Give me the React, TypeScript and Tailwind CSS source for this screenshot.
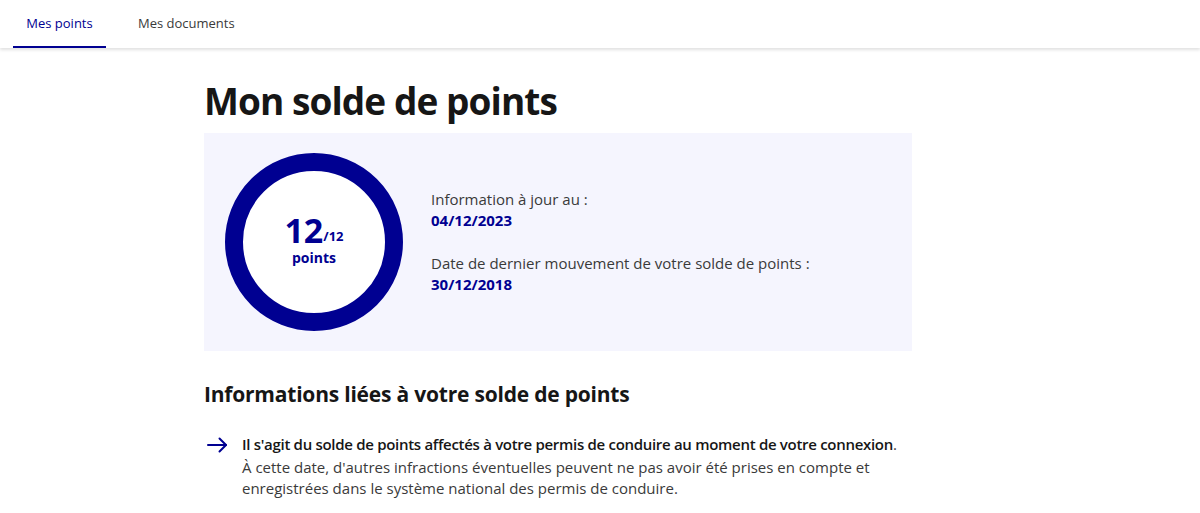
export default function App() {
  return (
    <div className="min-h-screen bg-white text-[#161616]" style={{ fontFamily: '"Open Sans", Arial, sans-serif' }}>
      {/* Tabs */}
      <nav className="h-12 shadow-[0_2px_3px_rgba(0,0,0,0.12)] flex items-stretch pl-[13px]">
        <button className="relative w-[93px] text-[13px] text-[#000091] font-medium">
          Mes points
          <span className="absolute left-0 right-0 bottom-0 h-[2px] bg-[#000091]"></span>
        </button>
        <button className="ml-[25px] px-[7px] text-[13px] text-[#3a3a3a] font-medium">Mes documents</button>
      </nav>

      <main className="w-[792px] mx-auto pt-[29px]">
        <h1 className="text-[37px] leading-[48px] font-bold tracking-tight">Mon solde de points</h1>

        {/* Balance card */}
        <section className="mt-[8px] w-[708px] h-[218px] bg-[#f5f5fe] flex items-center pl-[21px]">
          <div className="w-[178px] h-[178px] rounded-full border-[18px] border-[#000091] bg-white flex flex-col items-center justify-center text-[#000091]">
            <div className="flex items-end leading-[36px] mt-[-6px]">
              <span className="text-[34px] font-bold">12</span>
              <span className="text-[13px] leading-[20px] font-bold mb-[2px]">/12</span>
            </div>
            <span className="text-[14px] leading-[18px] font-bold mt-[1px]">points</span>
          </div>
          <div className="ml-[28px] text-[15px] leading-[21px] text-[#3a3a3a]">
            <p>Information à jour au :</p>
            <p className="text-[#000091] font-bold">04/12/2023</p>
            <p className="mt-[22px]">Date de dernier mouvement de votre solde de points :</p>
            <p className="text-[#000091] font-bold">30/12/2018</p>
          </div>
        </section>

        <h2 className="mt-[27px] text-[21px] leading-[32px] font-bold tracking-[-0.01em]">Informations liées à votre solde de points</h2>

        <div className="mt-[23px] flex items-start">
          <svg className="ml-[2px] mt-[4px] shrink-0" width="22" height="16" viewBox="0 0 22 16" fill="none" stroke="#000091" strokeWidth="2" strokeLinecap="round" strokeLinejoin="round">
            <path d="M2 8h18" />
            <path d="M13.5 1.5L20 8l-6.5 6.5" />
          </svg>
          <div className="ml-[14px] text-[15px] leading-[22.5px] text-[#3a3a3a]">
            <p>
              <span className="font-semibold text-[#161616] tracking-[-0.02em]">Il s'agit du solde de points affectés à votre permis de conduire au moment de votre connexion</span>.
            </p>
            <p>À cette date, d'autres infractions éventuelles peuvent ne pas avoir été prises en compte et</p>
            <p className="mt-[-1px]">enregistrées dans le système national des permis de conduire.</p>
          </div>
        </div>
      </main>
    </div>
  );
}
